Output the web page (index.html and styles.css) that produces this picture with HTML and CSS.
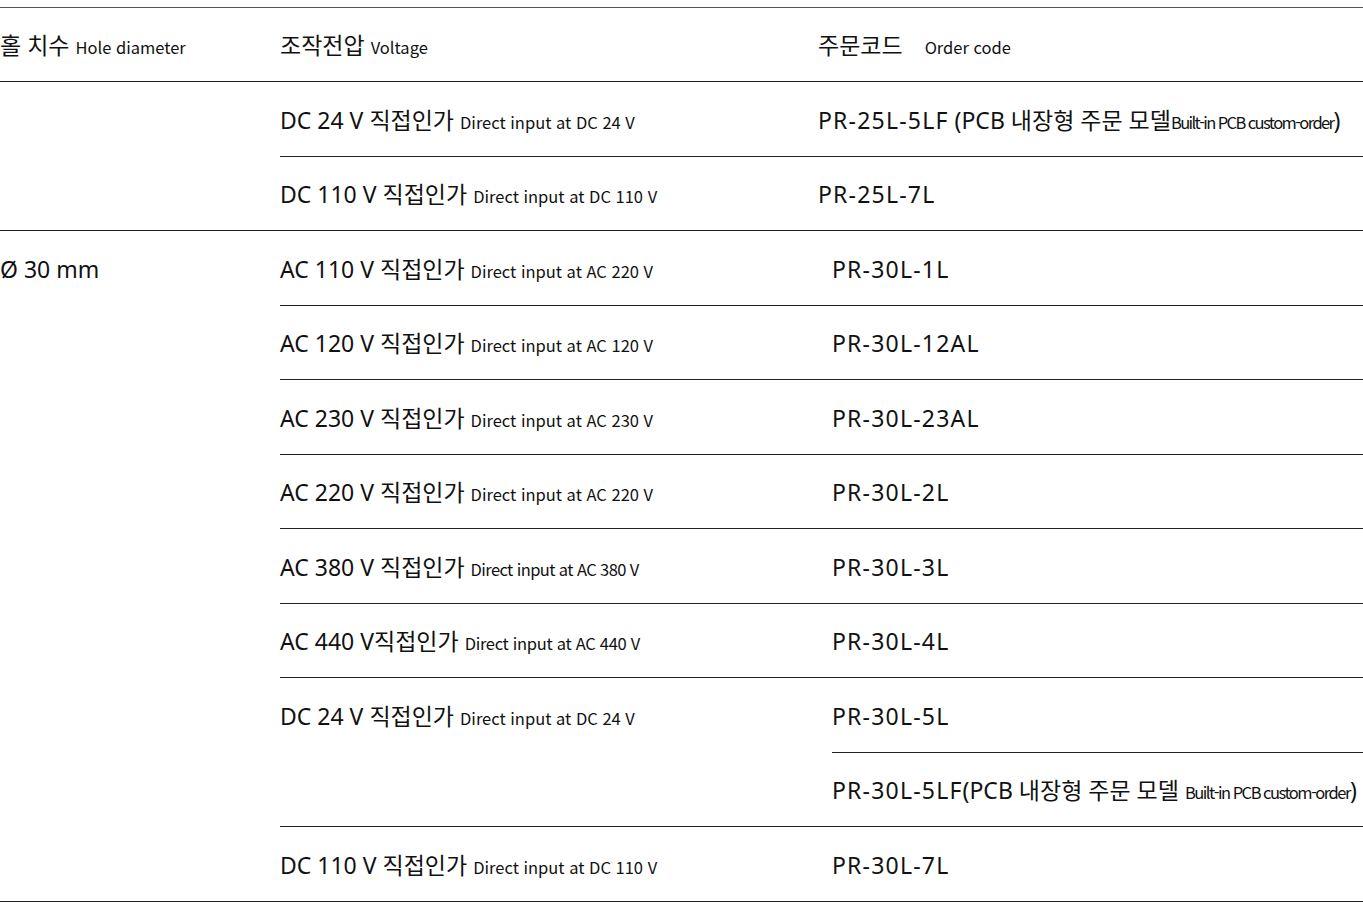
FILE: index.html
```html
<!DOCTYPE html>
<html lang="ko">
<head>
<meta charset="utf-8">
<title>Order code table</title>
<link rel="stylesheet" href="styles.css">
</head>
<body>
<div class="page">
  <div class="grid g1">
    <div class="cell"><span class="txt">홀 치수 <small>Hole diameter</small></span></div>
    <div class="cell"><span class="txt">조작전압 <small>Voltage</small></span></div>
    <div class="cell"><span class="txt">주문코드 <small class="oc">Order code</small></span></div>

    <div class="cell c1 span2"></div>
    <div class="cell"><span class="txt">DC 24 V 직접인가 <small>Direct input at DC 24 V</small></span></div>
    <div class="cell"><span class="txt"><span class="code">PR-25L-5LF</span> (PCB 내장형 주문 모델<small class="xcond">Built-in PCB custom-order</small>)</span></div>
    <div class="cell"><span class="txt">DC 110 V 직접인가 <small>Direct input at DC 110 V</small></span></div>
    <div class="cell"><span class="txt code">PR-25L-7L</span></div>
  </div>

  <div class="grid g2">
    <div class="cell c1 span9"><div class="first"><span class="txt">Ø 30 mm</span></div></div>
    <div class="cell"><span class="txt">AC 110 V 직접인가 <small>Direct input at AC 220 V</small></span></div>
    <div class="cell"><span class="txt code">PR-30L-1L</span></div>
    <div class="cell"><span class="txt">AC 120 V 직접인가 <small>Direct input at AC 120 V</small></span></div>
    <div class="cell"><span class="txt code">PR-30L-12AL</span></div>
    <div class="cell"><span class="txt">AC 230 V 직접인가 <small>Direct input at AC 230 V</small></span></div>
    <div class="cell"><span class="txt code">PR-30L-23AL</span></div>
    <div class="cell"><span class="txt">AC 220 V 직접인가 <small>Direct input at AC 220 V</small></span></div>
    <div class="cell"><span class="txt code">PR-30L-2L</span></div>
    <div class="cell"><span class="txt">AC 380 V 직접인가 <small class="cond">Direct input at AC 380 V</small></span></div>
    <div class="cell"><span class="txt code">PR-30L-3L</span></div>
    <div class="cell"><span class="txt">AC 440 V직접인가 <small class="semi">Direct input at AC 440 V</small></span></div>
    <div class="cell"><span class="txt code">PR-30L-4L</span></div>
    <div class="cell c1 span2"><div class="first"><span class="txt">DC 24 V 직접인가 <small>Direct input at DC 24 V</small></span></div></div>
    <div class="cell"><span class="txt code">PR-30L-5L</span></div>
    <div class="cell"><span class="txt"><span class="code">PR-30L-5LF</span>(PCB 내장형 주문 모델 <small class="cond2">Built-in PCB custom-order</small>)</span></div>
    <div class="cell"><span class="txt">DC 110 V 직접인가 <small>Direct input at DC 110 V</small></span></div>
    <div class="cell"><span class="txt code">PR-30L-7L</span></div>
  </div>
</div>
</body>
</html>
```

FILE: styles.css
```css
html, body {
  margin: 0;
  padding: 0;
  background: #fff;
}
body {
  font-family: "Noto Sans", "Noto Sans CJK KR", sans-serif;
  color: #111;
  font-size: 23px;
}
.page {
  padding-top: 6.5px;
}
.grid {
  display: grid;
  grid-auto-rows: 74.5px;
}
.g1 {
  grid-template-columns: 280px 538px 1fr;
  border-top: 1px solid #555;
}
.g2 {
  grid-template-columns: 280px 552px 1fr;
}
.cell {
  box-sizing: border-box;
  border-bottom: 1px solid #222;
  display: flex;
  align-items: center;
  padding-top: 3px;
}
.txt {
  white-space: nowrap;
  line-height: 1;
}
.c1 {
  display: block;
  padding-top: 0;
}
.span2 { grid-row: span 2; }
.span9 { grid-row: span 9; }
.first {
  box-sizing: border-box;
  height: 74.5px;
  display: flex;
  align-items: center;
  padding-top: 3px;
}
.code {
  letter-spacing: 1.2px;
}
small {
  font-family: "Noto Sans CJK KR", sans-serif;
  font-size: 16.5px;
  letter-spacing: 0;
}
.oc {
  margin-left: 16px;
}
.cond {
  letter-spacing: -0.6px;
}
.semi {
  letter-spacing: -0.3px;
}
.xcond {
  letter-spacing: -1.6px;
}
.cond2 {
  letter-spacing: -1.5px;
}
```
